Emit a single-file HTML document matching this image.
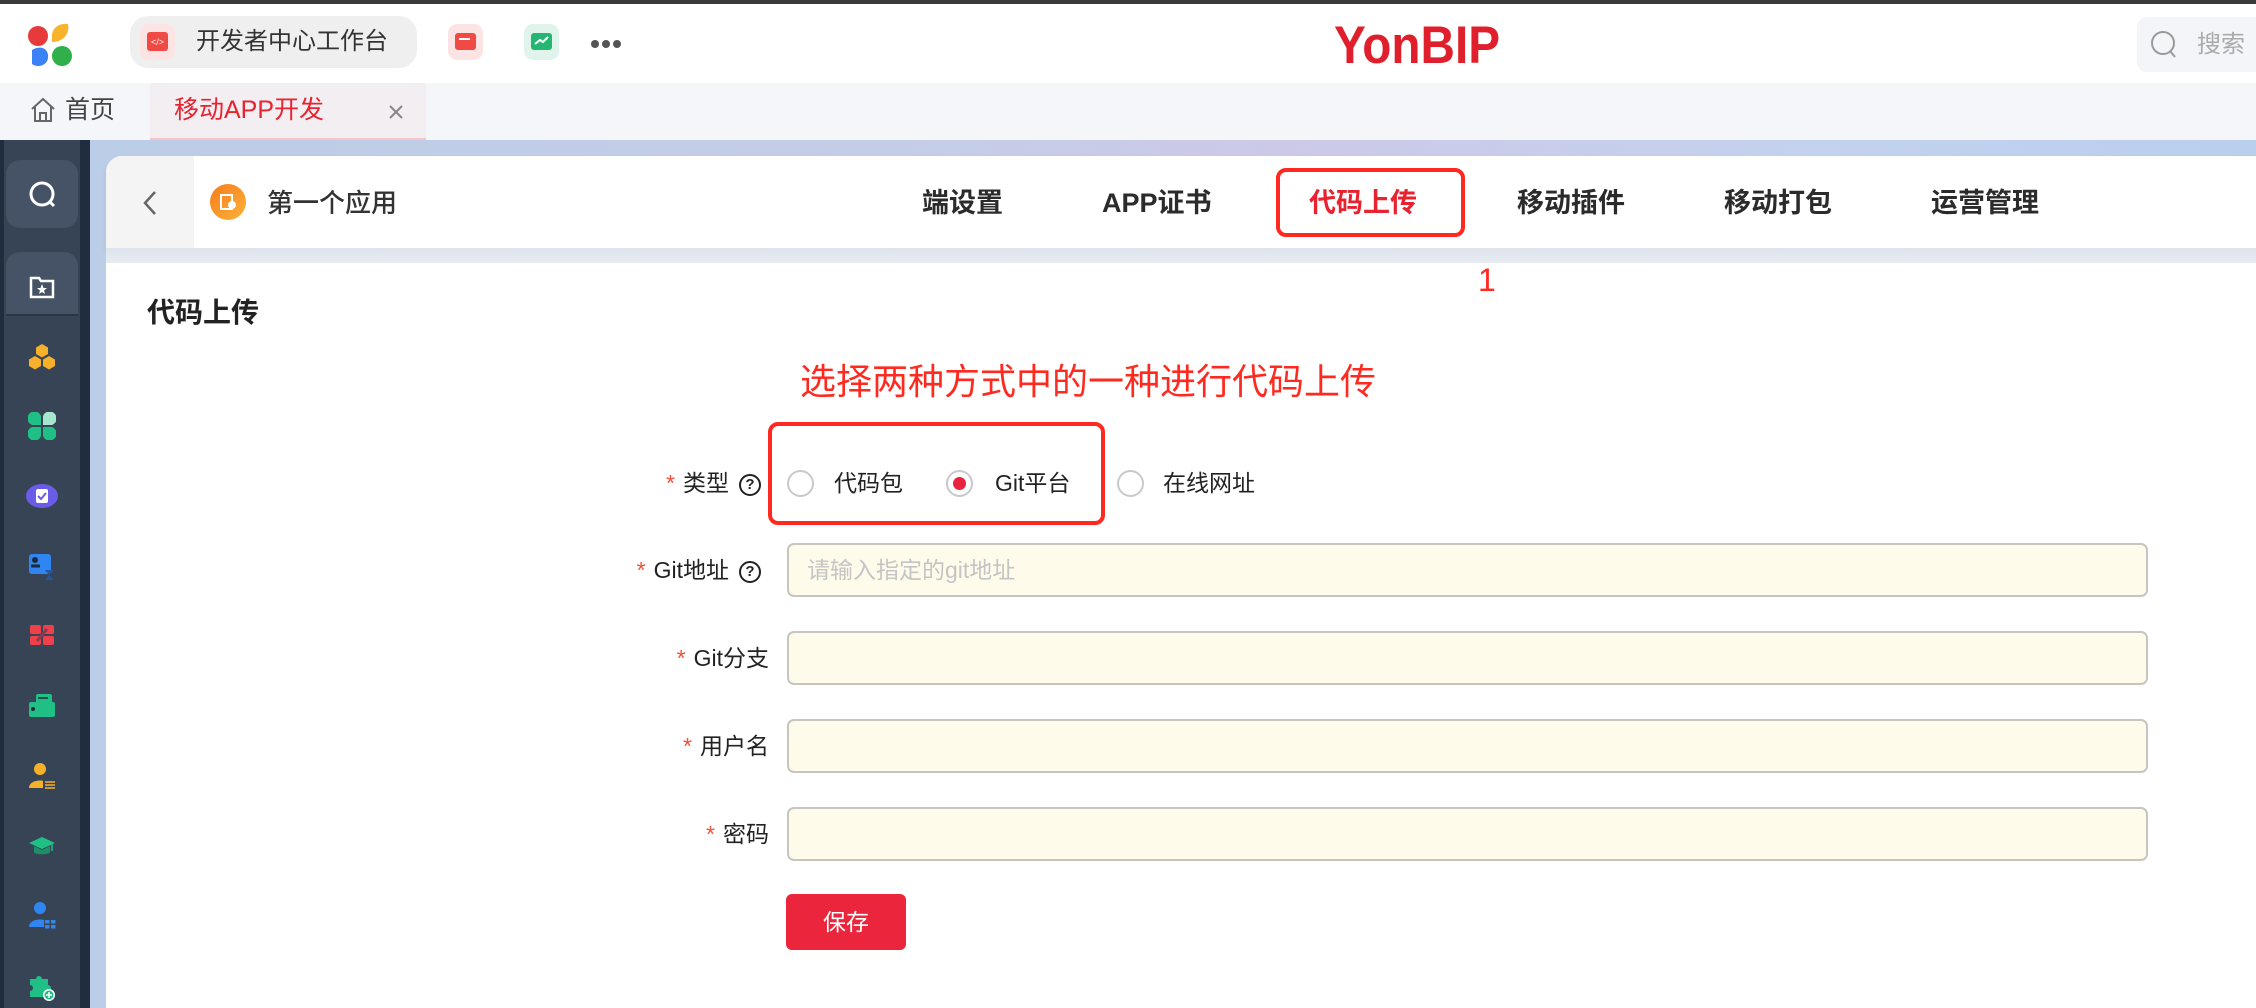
<!DOCTYPE html>
<html><head><meta charset="utf-8">
<style>
*{margin:0;padding:0;box-sizing:border-box}
body{width:2256px;height:1008px;overflow:hidden;background:#fff;font-family:"Liberation Sans","Noto Sans CJK SC",sans-serif;position:relative;color:#222}
.a{position:absolute}
.t{position:absolute;white-space:nowrap}
.inp{position:absolute;left:787px;width:1361px;height:54px;background:#fffbea;border:2px solid #c6c5bf;border-radius:7px}
.lbl{position:absolute;right:1487px;font-size:23px;line-height:30px;color:#222;white-space:nowrap}
.lbl b{color:#f0533a;font-weight:normal;margin-right:8px}
.q{display:inline-block;width:22px;height:22px;border:2px solid #222;border-radius:50%;font-size:15px;line-height:18px;text-align:center;font-weight:bold;vertical-align:2px;margin-left:10px}
.radio{position:absolute;width:27px;height:27px;border:2px solid #c9c9c9;border-radius:50%;background:#fff}
.nav{position:absolute;top:186px;font-size:27px;line-height:34px;font-weight:bold;color:#2b2b2b;white-space:nowrap}
.si{position:absolute;left:28px;width:28px;height:28px}
</style></head><body>
<!-- top bar -->
<div class="a" style="left:0;top:0;width:2256px;height:4px;background:#3a3b3d"></div>
<div class="a" style="left:0;top:4px;width:2256px;height:79px;background:#fff"></div>
<svg class="a" style="left:26px;top:22px" width="48" height="46" viewBox="0 0 48 46">
<circle cx="12" cy="14" r="10" fill="#e8393b"/>
<path d="M26 14 C26 5 34 1 42 2 C44 11 38 20 26 20Z" fill="#f7b32b"/>
<path d="M6 28 C14 23 23 26 22 36 C21 44 11 46 6 42Z" fill="#3b82f6"/>
<circle cx="36" cy="34" r="10" fill="#2fb04b"/>
</svg>
<div class="a" style="left:130px;top:16px;width:287px;height:52px;background:#efeff0;border-radius:18px"></div>
<div class="a" style="left:140px;top:24px;width:35px;height:36px;background:#fde4e4;border-radius:9px"></div>
<div class="a" style="left:147px;top:32px;width:21px;height:19px;background:#ef4a43;border-radius:3px;color:#fff;font-size:9px;line-height:21px;text-align:center">&lt;/&gt;</div>
<div class="t" style="left:196px;top:27px;font-size:24px;line-height:30px;color:#333">开发者中心工作台</div>
<div class="a" style="left:448px;top:24px;width:35px;height:36px;background:#fde4e4;border-radius:9px"></div>
<div class="a" style="left:455px;top:33px;width:21px;height:17px;background:#ef4a43;border-radius:3px"></div>
<div class="a" style="left:459px;top:38px;width:11px;height:2px;background:#fff"></div>
<div class="a" style="left:524px;top:24px;width:35px;height:36px;background:#e0f4ec;border-radius:9px"></div>
<div class="a" style="left:531px;top:33px;width:21px;height:17px;background:#26b673;border-radius:3px"></div>
<svg class="a" style="left:533px;top:35px" width="17" height="12"><path d="M2 9 L7 5 L10 7 L15 2" stroke="#fff" stroke-width="2" fill="none"/></svg>
<div class="a" style="left:591px;top:40px;width:8px;height:8px;border-radius:50%;background:#555"></div>
<div class="a" style="left:602px;top:40px;width:8px;height:8px;border-radius:50%;background:#555"></div>
<div class="a" style="left:613px;top:40px;width:8px;height:8px;border-radius:50%;background:#555"></div>
<div class="t" style="left:1334px;top:16px;font-size:53px;line-height:60px;font-weight:bold;color:#e01f2c;transform:scaleX(0.9);transform-origin:left">YonBIP</div>
<div class="a" style="left:2137px;top:17px;width:130px;height:55px;background:#f4f5f8;border-radius:10px"></div>
<svg class="a" style="left:2150px;top:30px" width="30" height="32"><circle cx="13" cy="13" r="11" stroke="#999" stroke-width="2" fill="none"/><path d="M20 21 L25 27" stroke="#999" stroke-width="2"/></svg>
<div class="t" style="left:2197px;top:30px;font-size:24px;line-height:30px;color:#aaa">搜索</div>
<!-- tab bar -->
<div class="a" style="left:0;top:83px;width:2256px;height:57px;background:#f5f6fa"></div>
<svg class="a" style="left:29px;top:96px" width="28" height="28" viewBox="0 0 28 28"><path d="M3 13 L14 3 L25 13 M6 11 V25 H22 V11 M11 25 V17 H17 V25" stroke="#666" stroke-width="2" fill="none"/></svg>
<div class="t" style="left:65px;top:95px;font-size:25px;line-height:30px;color:#444">首页</div>
<div class="a" style="left:150px;top:83px;width:276px;height:57px;background:#f3eef1;border-bottom:2px solid #f6c3c6"></div>
<div class="t" style="left:174px;top:95px;font-size:25px;line-height:30px;color:#e8232f">移动APP开发</div>
<svg class="a" style="left:388px;top:104px" width="16" height="16"><path d="M2 2 L14 14 M14 2 L2 14" stroke="#888" stroke-width="2"/></svg>
<!-- sidebar -->
<div class="a" style="left:0;top:140px;width:90px;height:868px;background:#202d3e"></div>
<div class="a" style="left:4px;top:140px;width:76px;height:868px;background:#374455"></div>
<div class="a" style="left:6px;top:160px;width:72px;height:68px;background:#465366;border-radius:14px"></div>
<svg class="a" style="left:27px;top:179px" width="32" height="32"><circle cx="15" cy="15" r="11" stroke="#fff" stroke-width="3" fill="none"/><path d="M22 22 L27 27" stroke="#fff" stroke-width="3"/></svg>
<div class="a" style="left:6px;top:252px;width:72px;height:64px;background:#465366;border-radius:14px 14px 0 0"></div>
<div class="a" style="left:6px;top:314px;width:72px;height:2px;background:#2a3647"></div>
<svg class="a" style="left:28px;top:272px" width="28" height="28"><path d="M3 6 H11 L13 9 H25 V25 H3Z" stroke="#fff" stroke-width="2.5" fill="none"/><path d="M14 12 L15.5 16 L19 16 L16 18.5 L17 22 L14 20 L11 22 L12 18.5 L9 16 L12.5 16Z" fill="#fff"/></svg>
<svg class="si" style="top:343px"><path d="M14 1 L20 4.5 V11 L14 14.5 L8 11 V4.5Z M7 13 L13 16.5 V23 L7 26.5 L1 23 V16.5Z M21 13 L27 16.5 V23 L21 26.5 L15 23 V16.5Z" fill="#f7b02a"/></svg>
<svg class="si" style="top:412px"><path d="M13 13 H4 A7 7 0 1 1 13 4Z M13 15 H4 A7 7 0 1 0 13 24Z M15 15 H24 A7 7 0 1 1 15 24Z" fill="#1fbf86"/><path d="M15 13 H24 A7 7 0 1 0 15 4Z" fill="#a6e6cf"/></svg>
<svg class="a" style="left:26px;top:482px" width="32" height="28"><ellipse cx="16" cy="14" rx="16" ry="12" fill="#6b5ce7"/><rect x="10" y="7" width="12" height="14" rx="2" fill="#fff"/><path d="M12 14 L15 17 L20 11" stroke="#6b5ce7" stroke-width="2" fill="none"/></svg>
<svg class="si" style="top:553px"><rect x="1" y="1" width="22" height="20" rx="3" fill="#2f86f0"/><circle cx="7" cy="7" r="3" fill="#1e2a3a"/><path d="M3 13 H12" stroke="#1e2a3a" stroke-width="3"/><path d="M17 17 H26 L21 22 L26 27 H17 L21 22Z" fill="#25579c"/></svg>
<svg class="si" style="top:621px"><rect x="2" y="4" width="11" height="9" rx="2" fill="#f0414b"/><rect x="15" y="4" width="11" height="9" rx="2" fill="#f0414b"/><rect x="2" y="15" width="11" height="9" rx="2" fill="#f0414b"/><rect x="15" y="15" width="11" height="9" rx="2" fill="#f0414b"/><path d="M9 20 L19 8" stroke="#8a3a55" stroke-width="3"/></svg>
<svg class="si" style="top:692px"><rect x="8" y="2" width="16" height="10" rx="2" fill="#1fbf86"/><rect x="1" y="10" width="26" height="15" rx="2" fill="#1fbf86"/><circle cx="5" cy="17" r="2" fill="#1e2a3a"/><path d="M10 6 H20" stroke="#1e2a3a" stroke-width="1.5"/></svg>
<svg class="si" style="top:762px"><circle cx="12" cy="7" r="6" fill="#f7b02a"/><path d="M1 26 C1 16 23 16 23 26Z" fill="#f7b02a"/><rect x="15" y="18" width="13" height="10" fill="#374455"/><path d="M17 20 H27 M17 23 H27 M17 26 H27" stroke="#f7b02a" stroke-width="1.5"/></svg>
<svg class="si" style="top:833px"><path d="M1 10 L14 4 L27 10 L14 16Z" fill="#1fbf86"/><path d="M6 13 V19 C6 22 22 22 22 19 V13 L14 17Z" fill="#1a8f68"/><path d="M24 11 V18" stroke="#1fbf86" stroke-width="1.5"/></svg>
<svg class="si" style="top:901px"><circle cx="12" cy="7" r="6" fill="#2f86f0"/><path d="M1 26 C1 16 23 16 23 26Z" fill="#2f86f0"/><rect x="16" y="18" width="12" height="10" fill="#374455"/><rect x="17" y="19" width="4.5" height="3.5" fill="#2f86f0"/><rect x="23" y="19" width="4.5" height="3.5" fill="#2f86f0"/><rect x="17" y="24" width="4.5" height="3.5" fill="#2f86f0"/><rect x="23" y="24" width="4.5" height="3.5" fill="#2f86f0"/></svg>
<svg class="si" style="top:973px"><path d="M2 6 H8 A3 3 0 1 1 14 6 H20 V12 A3 3 0 1 1 20 18 V24 H2 V18 A3 3 0 1 0 2 12Z" fill="#1fbf86"/><circle cx="21" cy="22" r="6" fill="#fff"/><circle cx="21" cy="22" r="4.5" fill="#1fbf86"/><path d="M18 22 H24 M21 19 V25" stroke="#fff" stroke-width="1.5"/></svg>
<!-- blue backdrop -->
<div class="a" style="left:90px;top:140px;width:2166px;height:868px;background:linear-gradient(90deg,#bccde7 0%,#c5cde8 40%,#ccc9e8 55%,#c3d2ee 80%,#b9cfee 100%)"></div>
<div class="a" style="left:106px;top:156px;width:2160px;height:92px;background:#fff;border-radius:16px 0 0 0;box-shadow:0 3px 6px rgba(0,0,0,.08)"></div>
<div class="a" style="left:106px;top:156px;width:88px;height:92px;background:#f4f4f4;border-radius:16px 0 0 0"></div>
<svg class="a" style="left:140px;top:189px" width="20" height="28"><path d="M15 3 L5 14 L15 25" stroke="#666" stroke-width="2.5" fill="none"/></svg>
<div class="a" style="left:210px;top:184px;width:36px;height:36px;border-radius:50%;background:linear-gradient(135deg,#f77b1c,#fbb33a)"></div>
<svg class="a" style="left:218px;top:191px" width="20" height="22"><rect x="3" y="4" width="11" height="14" fill="none" stroke="#fff" stroke-width="2"/><circle cx="14" cy="14" r="4" fill="#fff"/></svg>
<div class="t" style="left:267px;top:187px;font-size:26px;line-height:32px;color:#333;font-weight:500">第一个应用</div>
<div class="nav" style="left:922px">端设置</div>
<div class="nav" style="left:1102px">APP证书</div>
<div class="nav" style="left:1309px;color:#e8232f">代码上传</div>
<div class="nav" style="left:1517px">移动插件</div>
<div class="nav" style="left:1724px">移动打包</div>
<div class="nav" style="left:1931px">运营管理</div>
<div class="a" style="left:1276px;top:168px;width:189px;height:69px;border:4px solid #ff2a1f;border-radius:10px"></div>
<div class="a" style="left:106px;top:248px;width:2160px;height:16px;background:linear-gradient(180deg,#dfe4ec,#e8ecf2)"></div>
<!-- content -->
<div class="a" style="left:106px;top:263px;width:2160px;height:745px;background:#fff"></div>
<div class="t" style="left:1478px;top:262px;font-size:32px;line-height:36px;color:#ff2a1f">1</div>
<div class="t" style="left:147px;top:296px;font-size:28px;line-height:34px;font-weight:bold;color:#222">代码上传</div>
<div class="t" style="left:800px;top:362px;font-size:36px;line-height:40px;color:#ff2a1f">选择两种方式中的一种进行代码上传</div>
<div class="lbl" style="top:468px;right:1495px"><b>*</b>类型<span class="q">?</span></div>
<div class="a" style="left:768px;top:422px;width:337px;height:103px;border:4px solid #ff2a1f;border-radius:10px"></div>
<div class="radio" style="left:787px;top:470px"></div>
<div class="t" style="left:834px;top:468px;font-size:23px;line-height:30px">代码包</div>
<div class="radio" style="left:946px;top:470px"></div>
<div class="a" style="left:953px;top:477px;width:13px;height:13px;border-radius:50%;background:#e8233d"></div>
<div class="t" style="left:995px;top:468px;font-size:23px;line-height:30px">Git平台</div>
<div class="radio" style="left:1117px;top:470px"></div>
<div class="t" style="left:1163px;top:468px;font-size:23px;line-height:30px">在线网址</div>
<div class="lbl" style="top:555px;right:1495px"><b>*</b>Git地址<span class="q">?</span></div>
<div class="inp" style="top:543px"></div>
<div class="t" style="left:807px;top:555px;font-size:23px;line-height:30px;color:#c4c4c4">请输入指定的git地址</div>
<div class="lbl" style="top:643px"><b>*</b>Git分支</div>
<div class="inp" style="top:631px"></div>
<div class="lbl" style="top:731px"><b>*</b>用户名</div>
<div class="inp" style="top:719px"></div>
<div class="lbl" style="top:819px"><b>*</b>密码</div>
<div class="inp" style="top:807px"></div>
<div class="a" style="left:786px;top:894px;width:120px;height:56px;background:#ea253c;border-radius:6px;color:#fff;font-size:23px;line-height:56px;text-align:center">保存</div>
</body></html>
